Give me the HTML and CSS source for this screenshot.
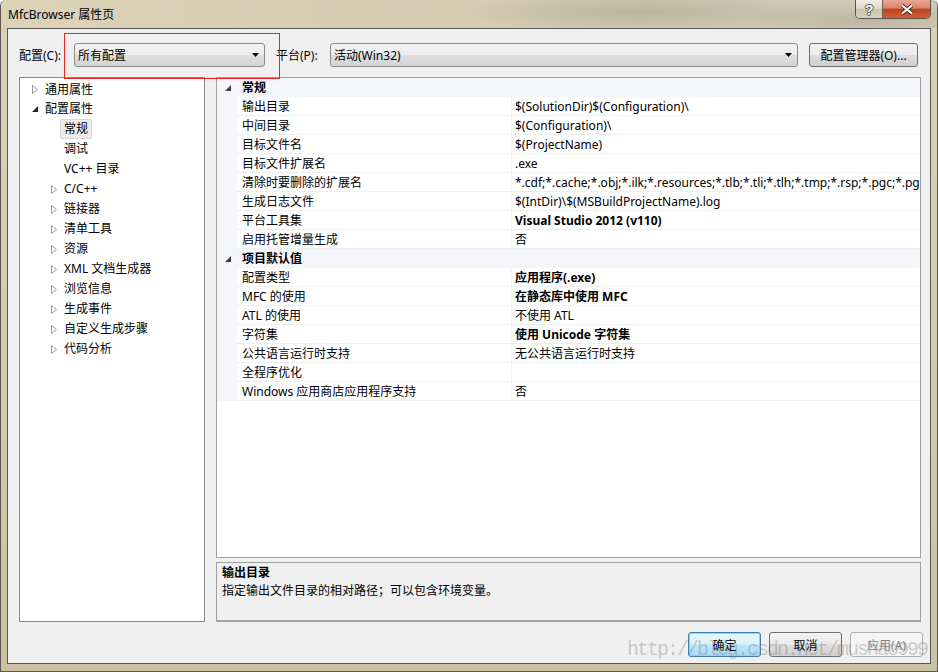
FILE: index.html
```html
<!DOCTYPE html>
<html lang="zh-CN">

<head>
    <meta charset="UTF-8">
    <meta name="viewport" content="width=device-width, initial-scale=1.0">
    <title>MfcBrowser 属性页</title>
    <link rel="stylesheet" href="styles.css">
</head>

<body>
    <div class="window">
        <div class="titlebar">
            <span class="title">MfcBrowser 属性页</span>
            <div class="caption">
                <span class="cap-btn cap-help">?</span>
                <span class="cap-btn cap-close">
                    <svg width="14" height="11" viewBox="0 0 14 11">
                        <path d="M2 1.5 L12 9.5 M12 1.5 L2 9.5" stroke="#4b2418" stroke-width="4" />
                        <path d="M2 1.5 L12 9.5 M12 1.5 L2 9.5" stroke="#ffffff" stroke-width="2.2" />
                    </svg>
                </span>
            </div>
        </div>

        <div class="client">
            <div class="toolbar">
                <span class="label label-config">配置(C):</span>
                <div class="combo combo-config">
                    <span>所有配置</span>
                    <svg width="7" height="4" viewBox="0 0 7 4"><path d="M0 0 H7 L3.5 4 Z" fill="#000" /></svg>
                </div>
                <span class="label label-platform">平台(P):</span>
                <div class="combo combo-platform">
                    <span>活动(Win32)</span>
                    <svg width="7" height="4" viewBox="0 0 7 4"><path d="M0 0 H7 L3.5 4 Z" fill="#000" /></svg>
                </div>
                <button class="btn btn-manager">配置管理器(O)...</button>
            </div>

            <div class="main">
                <div class="tree">
                    <div class="tree-row lvl1">
                        <span class="tw"><svg width="6" height="9" viewBox="0 0 6 9"><path d="M0.5 0.5 L5.5 4.5 L0.5 8.5 Z" fill="#fff" stroke="#9a9a9a" /></svg></span>
                        <span class="tree-text">通用属性</span>
                    </div>
                    <div class="tree-row lvl1">
                        <span class="tw"><svg width="6" height="6" viewBox="0 0 6 6"><path d="M6 0 V6 H0 Z" fill="#262626" /></svg></span>
                        <span class="tree-text">配置属性</span>
                    </div>
                    <div class="tree-row lvl2">
                        <span class="tw"></span>
                        <span class="tree-text selected">常规</span>
                    </div>
                    <div class="tree-row lvl2">
                        <span class="tw"></span>
                        <span class="tree-text">调试</span>
                    </div>
                    <div class="tree-row lvl2">
                        <span class="tw"></span>
                        <span class="tree-text">VC++ 目录</span>
                    </div>
                    <div class="tree-row lvl2">
                        <span class="tw"><svg width="6" height="9" viewBox="0 0 6 9"><path d="M0.5 0.5 L5.5 4.5 L0.5 8.5 Z" fill="#fff" stroke="#9a9a9a" /></svg></span>
                        <span class="tree-text">C/C++</span>
                    </div>
                    <div class="tree-row lvl2">
                        <span class="tw"><svg width="6" height="9" viewBox="0 0 6 9"><path d="M0.5 0.5 L5.5 4.5 L0.5 8.5 Z" fill="#fff" stroke="#9a9a9a" /></svg></span>
                        <span class="tree-text">链接器</span>
                    </div>
                    <div class="tree-row lvl2">
                        <span class="tw"><svg width="6" height="9" viewBox="0 0 6 9"><path d="M0.5 0.5 L5.5 4.5 L0.5 8.5 Z" fill="#fff" stroke="#9a9a9a" /></svg></span>
                        <span class="tree-text">清单工具</span>
                    </div>
                    <div class="tree-row lvl2">
                        <span class="tw"><svg width="6" height="9" viewBox="0 0 6 9"><path d="M0.5 0.5 L5.5 4.5 L0.5 8.5 Z" fill="#fff" stroke="#9a9a9a" /></svg></span>
                        <span class="tree-text">资源</span>
                    </div>
                    <div class="tree-row lvl2">
                        <span class="tw"><svg width="6" height="9" viewBox="0 0 6 9"><path d="M0.5 0.5 L5.5 4.5 L0.5 8.5 Z" fill="#fff" stroke="#9a9a9a" /></svg></span>
                        <span class="tree-text">XML 文档生成器</span>
                    </div>
                    <div class="tree-row lvl2">
                        <span class="tw"><svg width="6" height="9" viewBox="0 0 6 9"><path d="M0.5 0.5 L5.5 4.5 L0.5 8.5 Z" fill="#fff" stroke="#9a9a9a" /></svg></span>
                        <span class="tree-text">浏览信息</span>
                    </div>
                    <div class="tree-row lvl2">
                        <span class="tw"><svg width="6" height="9" viewBox="0 0 6 9"><path d="M0.5 0.5 L5.5 4.5 L0.5 8.5 Z" fill="#fff" stroke="#9a9a9a" /></svg></span>
                        <span class="tree-text">生成事件</span>
                    </div>
                    <div class="tree-row lvl2">
                        <span class="tw"><svg width="6" height="9" viewBox="0 0 6 9"><path d="M0.5 0.5 L5.5 4.5 L0.5 8.5 Z" fill="#fff" stroke="#9a9a9a" /></svg></span>
                        <span class="tree-text">自定义生成步骤</span>
                    </div>
                    <div class="tree-row lvl2">
                        <span class="tw"><svg width="6" height="9" viewBox="0 0 6 9"><path d="M0.5 0.5 L5.5 4.5 L0.5 8.5 Z" fill="#fff" stroke="#9a9a9a" /></svg></span>
                        <span class="tree-text">代码分析</span>
                    </div>
                </div>

                <div class="right">
                    <div class="grid">
                        <div class="prop-cat">
                            <span class="gutter"><svg width="6" height="6" viewBox="0 0 6 6"><path d="M6 0 V6 H0 Z" fill="#404040" /></svg></span>
                            <span class="cat-name">常规</span>
                        </div>
                        <div class="prop-row">
                            <span class="gutter"></span>
                            <span class="prop-name">输出目录</span>
                            <span class="prop-value">$(SolutionDir)$(Configuration)\</span>
                        </div>
                        <div class="prop-row">
                            <span class="gutter"></span>
                            <span class="prop-name">中间目录</span>
                            <span class="prop-value">$(Configuration)\</span>
                        </div>
                        <div class="prop-row">
                            <span class="gutter"></span>
                            <span class="prop-name">目标文件名</span>
                            <span class="prop-value">$(ProjectName)</span>
                        </div>
                        <div class="prop-row">
                            <span class="gutter"></span>
                            <span class="prop-name">目标文件扩展名</span>
                            <span class="prop-value">.exe</span>
                        </div>
                        <div class="prop-row">
                            <span class="gutter"></span>
                            <span class="prop-name">清除时要删除的扩展名</span>
                            <span class="prop-value">*.cdf;*.cache;*.obj;*.ilk;*.resources;*.tlb;*.tli;*.tlh;*.tmp;*.rsp;*.pgc;*.pgd;*.meta;$(TargetPath);$(ExtensionsToDeleteOnClean)</span>
                        </div>
                        <div class="prop-row">
                            <span class="gutter"></span>
                            <span class="prop-name">生成日志文件</span>
                            <span class="prop-value">$(IntDir)\$(MSBuildProjectName).log</span>
                        </div>
                        <div class="prop-row">
                            <span class="gutter"></span>
                            <span class="prop-name">平台工具集</span>
                            <span class="prop-value bold">Visual Studio 2012 (v110)</span>
                        </div>
                        <div class="prop-row">
                            <span class="gutter"></span>
                            <span class="prop-name">启用托管增量生成</span>
                            <span class="prop-value">否</span>
                        </div>
                        <div class="prop-cat">
                            <span class="gutter"><svg width="6" height="6" viewBox="0 0 6 6"><path d="M6 0 V6 H0 Z" fill="#404040" /></svg></span>
                            <span class="cat-name">项目默认值</span>
                        </div>
                        <div class="prop-row">
                            <span class="gutter"></span>
                            <span class="prop-name">配置类型</span>
                            <span class="prop-value bold">应用程序(.exe)</span>
                        </div>
                        <div class="prop-row">
                            <span class="gutter"></span>
                            <span class="prop-name">MFC 的使用</span>
                            <span class="prop-value bold">在静态库中使用 MFC</span>
                        </div>
                        <div class="prop-row">
                            <span class="gutter"></span>
                            <span class="prop-name">ATL 的使用</span>
                            <span class="prop-value">不使用 ATL</span>
                        </div>
                        <div class="prop-row">
                            <span class="gutter"></span>
                            <span class="prop-name">字符集</span>
                            <span class="prop-value bold">使用 Unicode 字符集</span>
                        </div>
                        <div class="prop-row">
                            <span class="gutter"></span>
                            <span class="prop-name">公共语言运行时支持</span>
                            <span class="prop-value">无公共语言运行时支持</span>
                        </div>
                        <div class="prop-row">
                            <span class="gutter"></span>
                            <span class="prop-name">全程序优化</span>
                            <span class="prop-value"></span>
                        </div>
                        <div class="prop-row">
                            <span class="gutter"></span>
                            <span class="prop-name">Windows 应用商店应用程序支持</span>
                            <span class="prop-value">否</span>
                        </div>
                    </div>

                    <div class="desc">
                        <div class="desc-title">输出目录</div>
                        <div class="desc-text">指定输出文件目录的相对路径；可以包含环境变量。</div>
                    </div>
                </div>
            </div>

            <div class="footer">
                <button class="btn btn-ok">确定</button>
                <button class="btn">取消</button>
                <button class="btn btn-disabled">应用(A)</button>
            </div>
        </div>

        <!-- annotation + watermark drawn over the dialog -->
        <div class="mark"></div>
        <div class="watermark">http://blog.csdn.net/mushao999</div>
    </div>
</body>

</html>
```

FILE: styles.css
```css
* {
    box-sizing: border-box;
}

body {
    margin: 0;
    background: #fff;
    font: 12px "Noto Sans", "Noto Sans CJK SC", sans-serif;
    color: #000;
}

.window {
    position: relative;
    width: 938px;
    height: 672px;
    display: flex;
    flex-direction: column;
    padding: 0 6px 7px 6px;
    background: linear-gradient(#dad1b8, #d2c9ae 60%, #cbc1a4);
    border: 1px solid #5c5850;
    border-top: none;
    border-radius: 6px 6px 0 0;
    overflow: hidden;
}

/* title bar */
.titlebar {
    display: flex;
    justify-content: space-between;
    align-items: flex-start;
    height: 28px;
    flex: none;
    margin: 0 -6px;
    padding-left: 7px;
    background:
        radial-gradient(ellipse 180px 20px at 640px 12px, rgba(120, 110, 90, 0.25), transparent),
        radial-gradient(ellipse 120px 18px at 860px 20px, rgba(120, 110, 90, 0.2), transparent),
        linear-gradient(90deg, #dbd2b8, #d4cbb2 55%, #cfc8b5);
}

.title {
    line-height: 30px;
}

.caption {
    display: flex;
    margin-right: 6px;
    height: 19px;
    border: 1px solid #57524a;
    border-top: none;
    border-radius: 0 0 5px 5px;
    overflow: hidden;
}

.cap-btn {
    display: flex;
    align-items: center;
    justify-content: center;
    height: 18px;
}

.cap-help {
    width: 27px;
    border-right: 1px solid #6b5f52;
    background: linear-gradient(#f0ede6, #dfd9cb 48%, #cbc3ad 52%, #d8d1c0);
    font: bold 15px "Liberation Sans", sans-serif;
    color: #f6f4ef;
    text-shadow: 1px 0 #555, -1px 0 #555, 0 1px #555, 0 -1px #555;
}

.cap-close {
    width: 47px;
    background: linear-gradient(#eaa892, #d8836b 45%, #c4421f 52%, #d0603c);
}

/* client area */
.client {
    flex: 1;
    min-width: 0;
    display: flex;
    flex-direction: column;
    background: #f0f0f0;
    border: 1px solid #575757;
}

.toolbar {
    display: flex;
    align-items: center;
    height: 24px;
    margin-top: 14px;
    padding-left: 11px;
}

.label {
    flex: none;
}

.label-config {
    width: 55px;
}

.label-platform {
    width: 54px;
    margin-left: 11px;
}

.combo {
    display: flex;
    align-items: center;
    justify-content: space-between;
    flex: none;
    height: 24px;
    padding: 0 5px 0 3px;
    border: 1px solid #8c8c8c;
    border-radius: 3px;
    background: linear-gradient(#f3f3f3, #ececec 48%, #dedede 52%, #d4d4d4);
}

.combo-config {
    width: 191px;
}

.combo-platform {
    width: 468px;
}

.btn {
    flex: none;
    height: 24px;
    padding: 0;
    font: 12px "Noto Sans", "Noto Sans CJK SC", sans-serif;
    color: #000;
    border: 1px solid #707070;
    border-radius: 3px;
    background: linear-gradient(#f2f2f2, #ebebeb 48%, #dddddd 52%, #cfcfcf);
}

.btn-manager {
    width: 109px;
    margin-left: 11px;
}

/* main panes */
.main {
    display: flex;
    margin-top: 10px;
    height: 545px;
    padding: 0 9px 0 11px;
}

.tree {
    width: 186px;
    flex: none;
    margin-right: 11px;
    padding-top: 2px;
    background: #fff;
    border: 1px solid #828790;
}

.tree-row {
    display: flex;
    align-items: center;
    height: 20px;
    white-space: nowrap;
}

.tree-row:first-child {
    height: 19px;
}

.lvl1 {
    padding-left: 12px;
}

.lvl2 {
    padding-left: 31px;
}

.tw {
    display: flex;
    align-items: center;
    width: 13px;
    flex: none;
}

.tree-text {
    line-height: 18px;
}

.selected {
    margin-left: -4px;
    padding: 0 3px;
    border: 1px solid #d6d6d6;
    border-radius: 2px;
    background: #ececec;
}

.right {
    flex: 1;
    min-width: 0;
    display: flex;
    flex-direction: column;
}

.grid {
    height: 481px;
    background: #fff;
    border: 1px solid #a0a0a0;
    overflow: hidden;
}

.prop-row,
.prop-cat {
    display: flex;
    height: 19px;
    line-height: 19px;
    white-space: nowrap;
}

.prop-cat {
    background: #f4f6fa;
    font-weight: bold;
}

.gutter {
    display: flex;
    align-items: center;
    width: 20px;
    flex: none;
    padding-left: 8px;
    background: #f4f6fa;
}

.cat-name {
    padding-left: 5px;
}

.prop-name {
    width: 275px;
    flex: none;
    padding-left: 5px;
    border-right: 1px solid #eceff4;
    box-shadow: inset 0 -1px #eceff4;
    overflow: hidden;
}

.prop-value {
    flex: 1;
    min-width: 0;
    padding-left: 3px;
    box-shadow: inset 0 -1px #eceff4;
    overflow: hidden;
}

.bold {
    font-weight: bold;
}

.desc {
    height: 60px;
    margin-top: 4px;
    padding: 1px 5px;
    line-height: 18px;
    background: #f0f0f0;
    border: 1px solid #a0a0a0;
    border-bottom-width: 2px;
}

.desc-title {
    font-weight: bold;
}

/* dialog buttons */
.footer {
    display: flex;
    justify-content: flex-end;
    gap: 8px;
    margin-top: 10px;
    padding-right: 7px;
}

.footer .btn {
    width: 73px;
    height: 25px;
}

.btn-ok {
    border-color: #3c7fb1;
    background: linear-gradient(#eaf6fd, #d9f0fc 48%, #bee6fd 52%, #a7d9f5);
    box-shadow: inset 0 0 0 1px #8ed2f5;
}

.btn-disabled {
    color: #838383;
    border-color: #adb2b5;
    background: #f4f4f4;
}

/* overlays */
.mark {
    position: absolute;
    left: 63px;
    top: 33px;
    width: 216px;
    height: 46px;
    border: 1px solid #e8231e;
}

.watermark {
    position: absolute;
    left: 626px;
    top: 638px;
    font: 20px "Liberation Mono", monospace;
    letter-spacing: -2px;
    color: rgba(120, 120, 120, 0.35);
    white-space: nowrap;
}
```
